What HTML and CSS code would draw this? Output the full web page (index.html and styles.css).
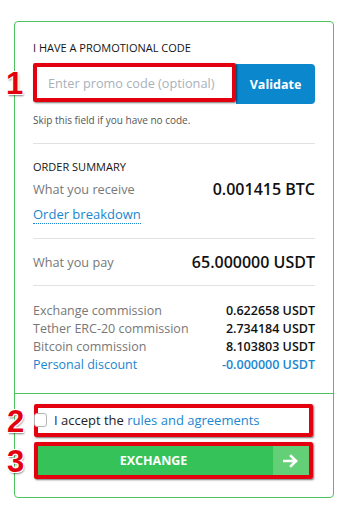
FILE: index.html
```html
<!DOCTYPE html>
<html lang="en">
<head>
    <meta charset="UTF-8">
    <meta name="viewport" content="width=device-width, initial-scale=1.0">
    <title>Exchange order</title>
    <link rel="stylesheet" href="styles.css">
</head>
<body>
    <div class="card">
        <div class="card-main">
            <div class="section-title">I HAVE A PROMOTIONAL CODE</div>
            <div class="promo-row">
                <div class="mark mark-input">
                    <span class="step">1</span>
                    <input type="text" class="promo-input" placeholder="Enter promo code (optional)">
                </div>
                <button class="validate-btn">Validate</button>
            </div>
            <div class="hint">Skip this field if you have no code.</div>

            <div class="divider"></div>

            <div class="section-title summary-title">ORDER SUMMARY</div>
            <div class="sum-row">
                <span class="sum-label">What you receive</span>
                <span class="sum-value">0.001415 BTC</span>
            </div>
            <a class="breakdown" href="#">Order breakdown</a>

            <div class="divider"></div>

            <div class="sum-row pay-row">
                <span class="sum-label">What you pay</span>
                <span class="sum-value">65.000000 USDT</span>
            </div>

            <div class="divider"></div>

            <div class="fees">
                <div class="fee-row"><span>Exchange commission</span><b>0.622658 USDT</b></div>
                <div class="fee-row"><span>Tether ERC-20 commission</span><b>2.734184 USDT</b></div>
                <div class="fee-row"><span>Bitcoin commission</span><b>8.103803 USDT</b></div>
                <div class="fee-row discount"><span>Personal discount</span><b>-0.000000 USDT</b></div>
            </div>
        </div>

        <div class="card-footer">
            <div class="mark mark-accept">
                <span class="step">2</span>
                <label class="accept">
                    <span class="checkbox"></span>
                    <span><span class="i-letter">I</span> accept the <a href="#">rules and agreements</a></span>
                </label>
            </div>
            <div class="mark mark-exchange">
                <span class="step">3</span>
                <button class="exchange-btn">
                    <span class="exchange-text">EXCHANGE</span>
                    <span class="exchange-arrow">
                        <svg width="16" height="14" viewBox="0 0 16 14">
                            <path d="M1 7h12M8 2l5 5-5 5" fill="none" stroke="#fff" stroke-width="2.6" stroke-linecap="square"/>
                        </svg>
                    </span>
                </button>
            </div>
        </div>
    </div>
</body>
</html>
```

FILE: styles.css
```css
* {
    box-sizing: border-box;
}

body {
    margin: 0;
    background: #fff;
    font-family: "Open Sans", "Noto Sans", sans-serif;
    color: #1b1b1b;
}

.card {
    width: 320px;
    margin: 21px 0 0 14px;
    border: 1px solid #4cc35f;
    border-radius: 4px;
}

.card-main {
    padding: 19px 18px 19px 18px;
}

.section-title {
    font-size: 11px;
    line-height: 14px;
    color: #151515;
}

.promo-row {
    display: flex;
    margin-top: 9px;
    height: 40px;
}

/* red annotation frames */
.mark {
    position: relative;
    border: 4px solid #e3000f;
    border-radius: 2px;
    box-shadow: 1px 1px 2px rgba(0, 0, 0, 0.55);
}

.step {
    position: absolute;
    left: -31px;
    top: 50%;
    transform: translateY(-50%);
    font-family: "Liberation Sans", Arial, sans-serif;
    font-weight: bold;
    font-size: 31px;
    line-height: 1;
    color: #e3000f;
    text-shadow: -1px -1px 0 #fff, 1px -1px 0 #fff, -1px 1px 0 #fff, 1px 1px 0 #fff, 1px 2px 2px rgba(0, 0, 0, 0.5);
}

.mark-input {
    width: 203px;
    height: 39px;
    margin-top: -1px;
}

.promo-input {
    width: 100%;
    height: 100%;
    border: none;
    outline: none;
    padding: 0 0 0 11px;
    font-family: inherit;
    font-size: 12.7px;
    color: #333;
}

.promo-input::placeholder {
    color: #a9b1bb;
}

.validate-btn {
    width: 79px;
    height: 40px;
    border: none;
    border-radius: 0 4px 4px 0;
    background: #0a87cd;
    color: #fff;
    font-family: inherit;
    font-weight: bold;
    font-size: 12.5px;
    padding: 0;
}

.hint {
    margin-top: 10px;
    font-size: 10px;
    line-height: 13px;
    color: #555;
}

.divider {
    height: 1px;
    background: #e2e2e2;
}

.card-main .hint + .divider {
    margin-top: 16px;
}

.summary-title {
    margin-top: 16px;
    font-weight: 500;
}

.sum-row {
    display: flex;
    justify-content: space-between;
    align-items: center;
    margin-top: 4px;
}

.sum-label {
    font-size: 12.7px;
    color: #777;
}

.sum-value {
    font-size: 16px;
    font-weight: 600;
    color: #111;
}

.breakdown {
    display: inline-block;
    margin-top: 5px;
    font-size: 13px;
    line-height: 18px;
    color: #1a86d0;
    text-decoration: none;
    border-bottom: 1px dotted #1a86d0;
    margin-bottom: 14px;
}

.pay-row {
    margin: 12px 0 12px;
}

.fees {
    margin-top: 16px;
}

.fee-row {
    display: flex;
    justify-content: space-between;
    font-size: 12.5px;
    line-height: 18px;
    color: #777;
}

.fee-row b {
    font-weight: 600;
    color: #111;
}

.fee-row.discount span,
.fee-row.discount b {
    color: #1a86d0;
}

.card-footer {
    border-top: 1px solid #4cc35f;
    padding: 10px 20px 18px 19px;
}

.mark-accept {
    height: 33px;
    padding: 3px 0 0 0;
}

.accept {
    display: flex;
    align-items: center;
    gap: 7px;
    font-size: 13px;
    color: #222;
}

.checkbox {
    width: 13px;
    height: 14px;
    border: 1px solid #b5b5b5;
    border-radius: 3px;
    margin-left: -4px;
    background: #fff;
}

.i-letter {
    color: #1c1c8c;
}

.accept a {
    color: #1a86d0;
    text-decoration: none;
}

.mark-exchange {
    margin-top: 5px;
    height: 37px;
}

.exchange-btn {
    display: flex;
    width: 100%;
    height: 100%;
    padding: 0;
    border: none;
    background: #35c259;
    color: #fff;
    font-family: inherit;
}

.exchange-text {
    flex: 1;
    align-self: center;
    font-weight: bold;
    font-size: 12.5px;
    padding-right: 4px;
}

.exchange-arrow {
    width: 36px;
    display: flex;
    align-items: center;
    justify-content: center;
    background: #63cf76;
}
```
